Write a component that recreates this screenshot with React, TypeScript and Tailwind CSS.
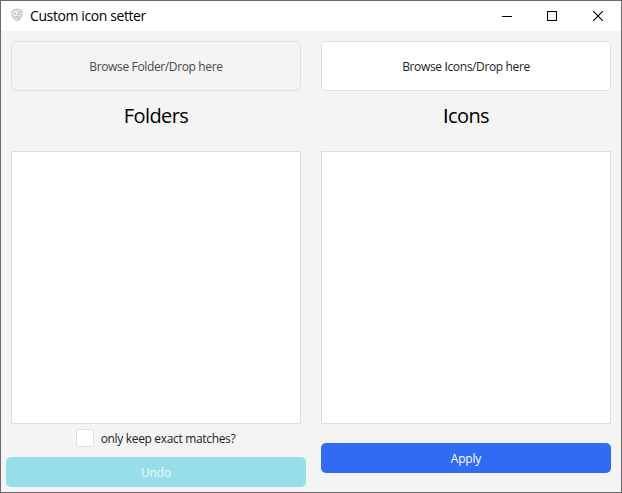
import type { ReactNode } from "react";

function AppIcon() {
  return (
    <svg className="ml-[9px] h-[14px] w-[14px] -translate-y-px" viewBox="0 0 14 14" fill="none">
      <path d="M2 3 4 1.5 7 1l3 .5L12 3v4l-1 3-2 2-2 .7L5 12l-2-2-1-3Z" fill="#dedede" stroke="#c8c8c8" />
      <path d="M3.5 3.5h7l.5 3-2 3H6L3 7Z" fill="#ededed" />
      <path d="M4 5.5h2M8 4.5h2.5M7.5 6.5h2.5M5 8.8h4M9.5 10.5 8 12" stroke="#b0b0b0" />
    </svg>
  );
}

/* Capital I without serifs */
function PlainI() {
  return <span className="font-['Liberation_Sans',sans-serif] leading-none">I</span>;
}

function TitleBar() {
  return (
    <header className="flex h-[30px] shrink-0 items-center bg-white">
      <AppIcon />
      <h1 className="ml-[6px] whitespace-nowrap text-[14px] leading-[20px] tracking-[-0.4px] text-black">Custom icon setter</h1>
      <div className="ml-auto flex h-[30px] text-black">
        <button className="flex w-[46px] items-center justify-center" aria-label="Minimize">
          <svg width="10" height="10" shapeRendering="crispEdges"><path d="M0 5.5h10" stroke="currentColor" /></svg>
        </button>
        <button className="flex w-[45px] items-center justify-center pr-[2px]" aria-label="Maximize">
          <svg width="10" height="10" shapeRendering="crispEdges"><path d="M.5.5h9v9h-9z" fill="none" stroke="currentColor" /></svg>
        </button>
        <button className="flex w-[46px] items-center justify-center" aria-label="Close">
          <svg width="10" height="10"><path d="M0 0 10 10M10 0 0 10" stroke="currentColor" strokeWidth="1.1" /></svg>
        </button>
      </div>
    </header>
  );
}

function Panel({ browse, title, tone, children }: { browse: ReactNode; title: ReactNode; tone: string; children: ReactNode }) {
  return (
    <section className="flex w-[310px] flex-col px-[10px] pt-[10px]">
      <button className={`h-[50px] shrink-0 rounded-[5px] border border-[#dfdfdf] pt-[2px] text-[12px] tracking-[-0.36px] ${tone}`}>{browse}</button>
      <h2 className="flex h-[60px] shrink-0 justify-center pt-[11px] text-[20px] font-normal leading-[28px] tracking-[-0.55px] text-black">{title}</h2>
      <div className="h-[273px] shrink-0 border border-[#dfdfdf] bg-white" />
      {children}
    </section>
  );
}

export default function App() {
  return (
    <div className="flex h-[493px] w-[622px] flex-col overflow-hidden border border-[#6b6b6b] bg-[#f4f4f4] font-['Open_Sans','Noto_Sans',sans-serif]">
      <TitleBar />
      <main className="flex">
        <Panel browse="Browse Folder/Drop here" title="Folders" tone="bg-[#f4f4f4] text-[#484848]">
          <label className="mt-[5px] flex h-[18px] items-center justify-center gap-[7px] whitespace-nowrap pr-px text-[12px] tracking-[-0.33px] text-[#222]">
            <span className="h-[18px] w-[18px] rounded-[2px] border border-[#dfdfdf] bg-white" />
            <span className="pt-[2px]">only keep exact matches?</span>
          </label>
          <button className="-mx-[5px] mt-[10px] h-[30px] rounded-[5px] bg-[#96dfe9] pt-[2px] text-[12px] font-medium tracking-[-0.2px] text-[#f0f9fa]">Undo</button>
        </Panel>
        <Panel browse={<>Browse <PlainI />cons/Drop here</>} title={<span><PlainI />cons</span>} tone="bg-white text-[#222]">
          <button className="mt-[19px] h-[30px] rounded-[5px] bg-[#306cf3] pt-[2px] text-[12px] font-medium tracking-[-0.2px] text-white">Apply</button>
        </Panel>
      </main>
    </div>
  );
}
